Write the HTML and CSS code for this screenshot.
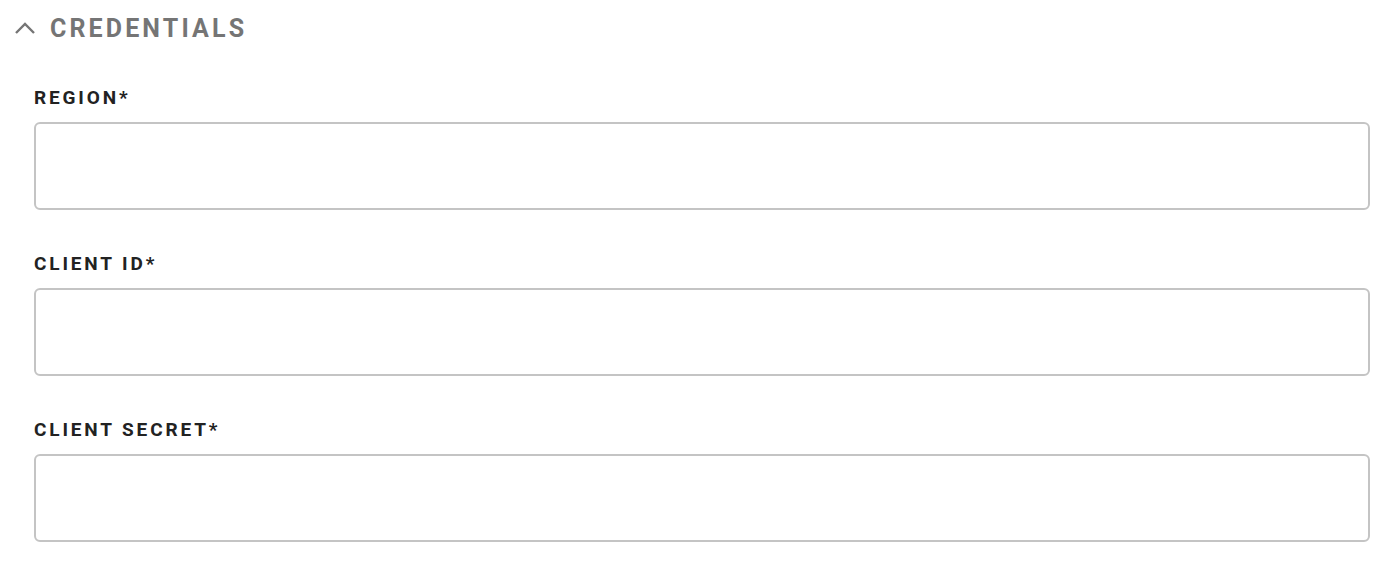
FILE: index.html
```html
<!DOCTYPE html>
<html>
<head>
<meta charset="utf-8">
<link rel="stylesheet" href="styles.css">
</head>
<body>
<section class="panel">
  <div class="panel-head">
    <svg class="chev" width="22" height="14" viewBox="0 0 22 14"><path d="M2 12 L11 3 L20 12" fill="none" stroke="#757575" stroke-width="2.4"/></svg>
    <h2 class="title">CREDENTIALS</h2>
  </div>
  <div class="fields">
    <div class="field">
      <label class="label">REGION*</label>
      <input class="input" type="text">
    </div>
    <div class="field">
      <label class="label">CLIENT ID*</label>
      <input class="input" type="text">
    </div>
    <div class="field">
      <label class="label">CLIENT SECRET*</label>
      <input class="input" type="text">
    </div>
  </div>
</section>
</body>
</html>
```
FILE: styles.css
```css
html, body { margin: 0; padding: 0; background: #fff; }
body { font-family: Roboto, "Liberation Sans", sans-serif; }
.panel { padding: 14px 27px 0 14px; }
.panel-head { display: flex; align-items: center; height: 30px; gap: 14px; }
.chev { display: block; margin-top: -3px; }
.title { margin: 0; font-size: 25px; line-height: 30px; font-weight: 700; letter-spacing: 0.125em; color: #757575; }
.fields { display: flex; flex-direction: column; gap: 43px; margin-top: 43px; padding-left: 20px; }
.field { display: flex; flex-direction: column; gap: 13px; }
.label { font-size: 19px; line-height: 22px; font-weight: 700; letter-spacing: 0.15em; color: #222; }
.input { box-sizing: border-box; height: 88px; width: 100%; border: 2px solid #c4c4c4; border-radius: 6px; margin: 0; padding: 0 12px; background: #fff; font: inherit; }
```
